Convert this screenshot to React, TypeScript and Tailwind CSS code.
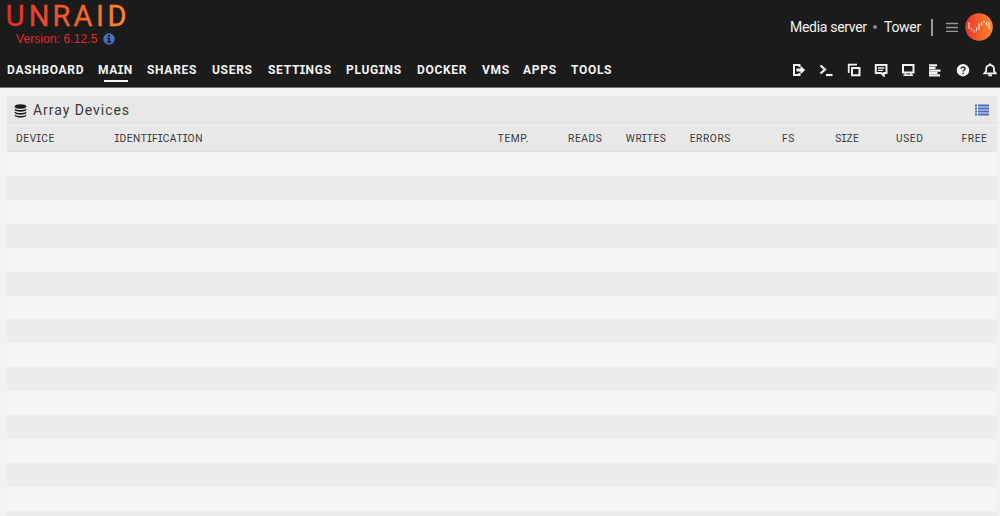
import React from "react";

type NavItem = { label: string; box: string; active?: boolean };

const NAV: NavItem[] = [
  { label: "DASHBOARD", box: "w-[91px]" },
  { label: "MAIN", box: "w-[49px]", active: true },
  { label: "SHARES", box: "w-[65px]" },
  { label: "USERS", box: "w-[56px]" },
  { label: "SETTINGS", box: "w-[78px]" },
  { label: "PLUGINS", box: "w-[71px]" },
  { label: "DOCKER", box: "w-[65px]" },
  { label: "VMS", box: "w-[41px]" },
  { label: "APPS", box: "w-[48px]" },
  { label: "TOOLS", box: "w-[48px]" },
];

const COLUMNS = [
  { label: "DEVICE", box: "w-[99px] text-left" },
  { label: "IDENTIFICATION", box: "w-[289.5px] text-left" },
  { label: "TEMP.", box: "w-[124.5px] text-right" },
  { label: "READS", box: "w-[73.5px] text-right" },
  { label: "WRITES", box: "w-[64px] text-right" },
  { label: "ERRORS", box: "w-[64.5px] text-right" },
  { label: "FS", box: "w-[64px] text-right" },
  { label: "SIZE", box: "w-[64.5px] text-right" },
  { label: "USED", box: "w-[64px] text-right" },
  { label: "FREE", box: "w-[64px] text-right" },
];

const ROWS = Array.from({ length: 16 }, (_, i) => i);

/* Sets each capital I in a face that has serifs on it. */
function Caps({ text }: { text: string }) {
  return (
    <span>
      {text.split(/(I)/).map((part, i) =>
        part === "I" ? (
          <span key={i} className="-mx-[1px] font-['DejaVu_Sans_Mono',monospace] text-[0.95em] leading-none">
            I
          </span>
        ) : (
          part
        ),
      )}
    </span>
  );
}

function Logo() {
  return (
    <svg width="124" height="24" viewBox="0 0 124 24" className="block overflow-visible">
      <defs>
        <linearGradient id="brand" x1="0" y1="0" x2="122" y2="0" gradientUnits="userSpaceOnUse">
          <stop offset="0" stopColor="#e22c2c" />
          <stop offset="1" stopColor="#ff8b2e" />
        </linearGradient>
      </defs>
      <text
        x="-1.2 21.800 45.500 66.500 89 100.500"
        y="21.5"
        fill="url(#brand)"
        stroke="url(#brand)"
        strokeWidth="0.300"
        fontFamily="Roboto, sans-serif"
        fontSize="29"
        fontWeight="400"
      >
        UNRAID
      </text>
    </svg>
  );
}

function Glyph({ children }: { children: React.ReactNode }) {
  return (
    <svg width="14" height="14" viewBox="0 0 14 14" fill="none" stroke="#f2f2f2" strokeWidth="2" className="block">
      {children}
    </svg>
  );
}

function Toolbar() {
  return (
    <div className="flex gap-[13.3px]">
      <Glyph>
        <path d="M7.500 4V2H2v10h5.500v-2" />
        <path d="M4.5 7H10" strokeWidth="3" />
        <path d="M8.500 2.800L13.200 7 8.500 11.200z" fill="#f2f2f2" stroke="none" />
      </Glyph>
      <Glyph>
        <path d="M1.5 2.5L6 6.5l-4.500 4" strokeWidth="2.200" />
        <path d="M7 12h6.500" strokeWidth="2.200" />
      </Glyph>
      <Glyph>
        <path d="M1.700 10V1.700H10" strokeWidth="1.700" />
        <path d="M5 5h7.500v7.200H5z" />
      </Glyph>
      <Glyph>
        <path d="M1.800 2h10.700v8H9.800v2.500L7 10H1.800z" strokeWidth="2" />
        <path d="M4 5h6.300M4 7.300h5" strokeWidth="1.300" />
      </Glyph>
      <Glyph>
        <path d="M2 2h10.500v7.500H2z" />
        <path d="M4.500 10v2M10 10v2M2.500 12.300h9.500" strokeWidth="1.600" />
      </Glyph>
      <Glyph>
        <path d="M1 2.200h8M1 4.900h6.500M1 7.600h11.500M1 10h8.500M1 12.400h11" strokeWidth="2.100" />
      </Glyph>
      <Glyph>
        <circle cx="7" cy="7.200" r="6.200" fill="#f2f2f2" stroke="none" />
        <path d="M5 5.800c.2-2.300 4-2.100 4 0 0 1.200-1.900 1.300-1.900 2.700M7.100 9.700v1.500" stroke="#1c1b1b" strokeWidth="1.400" />
      </Glyph>
      <Glyph>
        <path d="M1.500 10.300h11.200l-1.700-2.200V5.500C11 1 3.200 1 3.200 5.500v2.600z" strokeWidth="1.800" />
        <path d="M5.300 12.300h3.600M7.100 0.500v2" strokeWidth="2" />
      </Glyph>
    </div>
  );
}

function Avatar() {
  return (
    <svg width="28" height="28" viewBox="0 0 28 28" className="block">
      <defs>
        <linearGradient id="disc" x1="0" y1="0" x2="1" y2="0">
          <stop offset="0" stopColor="#e8322c" />
          <stop offset="1" stopColor="#ff8b2b" />
        </linearGradient>
      </defs>
      <circle cx="14" cy="14" r="13.800" fill="url(#disc)" />
      <path
        d="M4 9.500v6.500M6.500 14.500v3M9 17v2.500M11.500 14.500v3.500M14 10.500v6M16.500 9v3.500M19 7.500v2.500M21.500 9v3.500M24 9.500v6.500"
        stroke="#ffe3da"
        strokeWidth="1.200"
      />
    </svg>
  );
}

function Header() {
  return (
    <header className="flex h-[88px] justify-between border-b border-[#777777] bg-[#1c1b1b] text-[#f2f2f2]">
      <div className="flex flex-col pl-[7px] pt-[4px]">
        <Logo />
        <div className="flex h-[22px] items-center pl-[9px] text-[#e22828]">
          <span className="w-[87px] whitespace-nowrap font-['Liberation_Sans',sans-serif] text-[12px] leading-[18px] tracking-[0.1px]">
            Version: 6.12.5
          </span>
          <svg width="12" height="12" viewBox="0 0 12 12">
            <circle cx="6" cy="6" r="5.800" fill="#486dba" />
            <path d="M5 2.800h2M4.300 5.200H6.200V9M4 9h4.200" fill="none" stroke="#1c1b1b" strokeWidth="1.600" />
          </svg>
        </div>
        <nav className="mt-[10px] flex font-['Roboto',sans-serif] text-[12px] leading-[20px] font-bold tracking-[0.7px]">
          {NAV.map((item) => (
            <a key={item.label} className={`${item.box} flex h-[22px] flex-col whitespace-nowrap`}>
              <Caps text={item.label} />
              {item.active && <span className="ml-[6px] h-[2px] w-[24px] bg-[#f2f2f2]" />}
            </a>
          ))}
        </nav>
      </div>
      <div className="flex w-[210px] flex-col">
        <div className="flex h-[54px] items-center">
          <span className="w-[83px] whitespace-nowrap font-['Roboto',sans-serif] text-[14px] leading-[20px] tracking-[-0.3px]">
            Media server
          </span>
          <span className="h-[4px] w-[4px] rounded-full bg-[#888888]" />
          <span className="ml-[7px] w-[47px] whitespace-nowrap font-['Roboto',sans-serif] text-[14px] leading-[20px] tracking-[-0.3px]">
            Tower
          </span>
          <span className="h-[17px] w-[1.500px] bg-[#999999]" />
          <svg width="12" height="10" viewBox="0 0 12 10" className="ml-[13.5px]">
            <path d="M0 1.500h12M0 5.500h12M0 9.500h12" stroke="#999999" strokeWidth="1.300" />
          </svg>
          <span className="ml-[7px]">
            <Avatar />
          </span>
        </div>
        <div className="pl-[2px] pt-[9px]">
          <Toolbar />
        </div>
      </div>
    </header>
  );
}

export default function App() {
  return (
    <div className="h-[516px] w-[1000px] overflow-hidden bg-[#f2f2f2]">
      <Header />
      <main className="ml-[7px] mt-[8px] w-[990px]">
        <div className="flex h-[29px] items-center bg-[#e8e8e8] pl-[7px] pr-[8px]">
          <svg width="13" height="14" viewBox="0 0 13 14">
            <ellipse cx="6.500" cy="2.500" rx="5.800" ry="2.300" fill="#1c1b1b" />
            <path d="M.7 4.400c2 2 9.600 2 11.600 0v1.700c-1.500 2.200-10.100 2.200-11.600 0zM.7 7.500c2 2 9.600 2 11.600 0v1.600c-1.500 2.200-10.100 2.200-11.600 0zM.7 10.500c2 2 9.600 2 11.600 0v1.300c-1.500 2.400-10.100 2.400-11.600 0z" fill="#1c1b1b" />
          </svg>
          <h1 className="-mt-[2px] ml-[6px] grow font-['Roboto',sans-serif] text-[14px] leading-[20px] tracking-[0.95px] text-[#3a3a3a]">
            Array Devices
          </h1>
          <svg width="14" height="12" viewBox="0 0 14 12" className="-mt-[2px]">
            <path d="M0 1.500h2M0 4.500h2M0 7.500h2M0 10.500h2M3 1.500h11M3 4.500h11M3 7.500h11M3 10.500h11" stroke="#486dba" strokeWidth="2" />
          </svg>
        </div>
        <div className="mt-px flex h-[26px] items-center border-b border-[#e0e0e0] bg-[#e8e8e8] pl-[9px] font-['Roboto',sans-serif] text-[10.2px] leading-[16px] tracking-[0.6px] text-[#3a3a3a]">
          {COLUMNS.map((col) => (
            <span key={col.label} className={`${col.box} shrink-0 whitespace-nowrap`}>
              <Caps text={col.label} />
            </span>
          ))}
        </div>
        {ROWS.map((row) => (
          <div key={row} className="h-[23.93px] bg-[#f5f5f5] even:bg-[#ededed]" />
        ))}
      </main>
    </div>
  );
}
